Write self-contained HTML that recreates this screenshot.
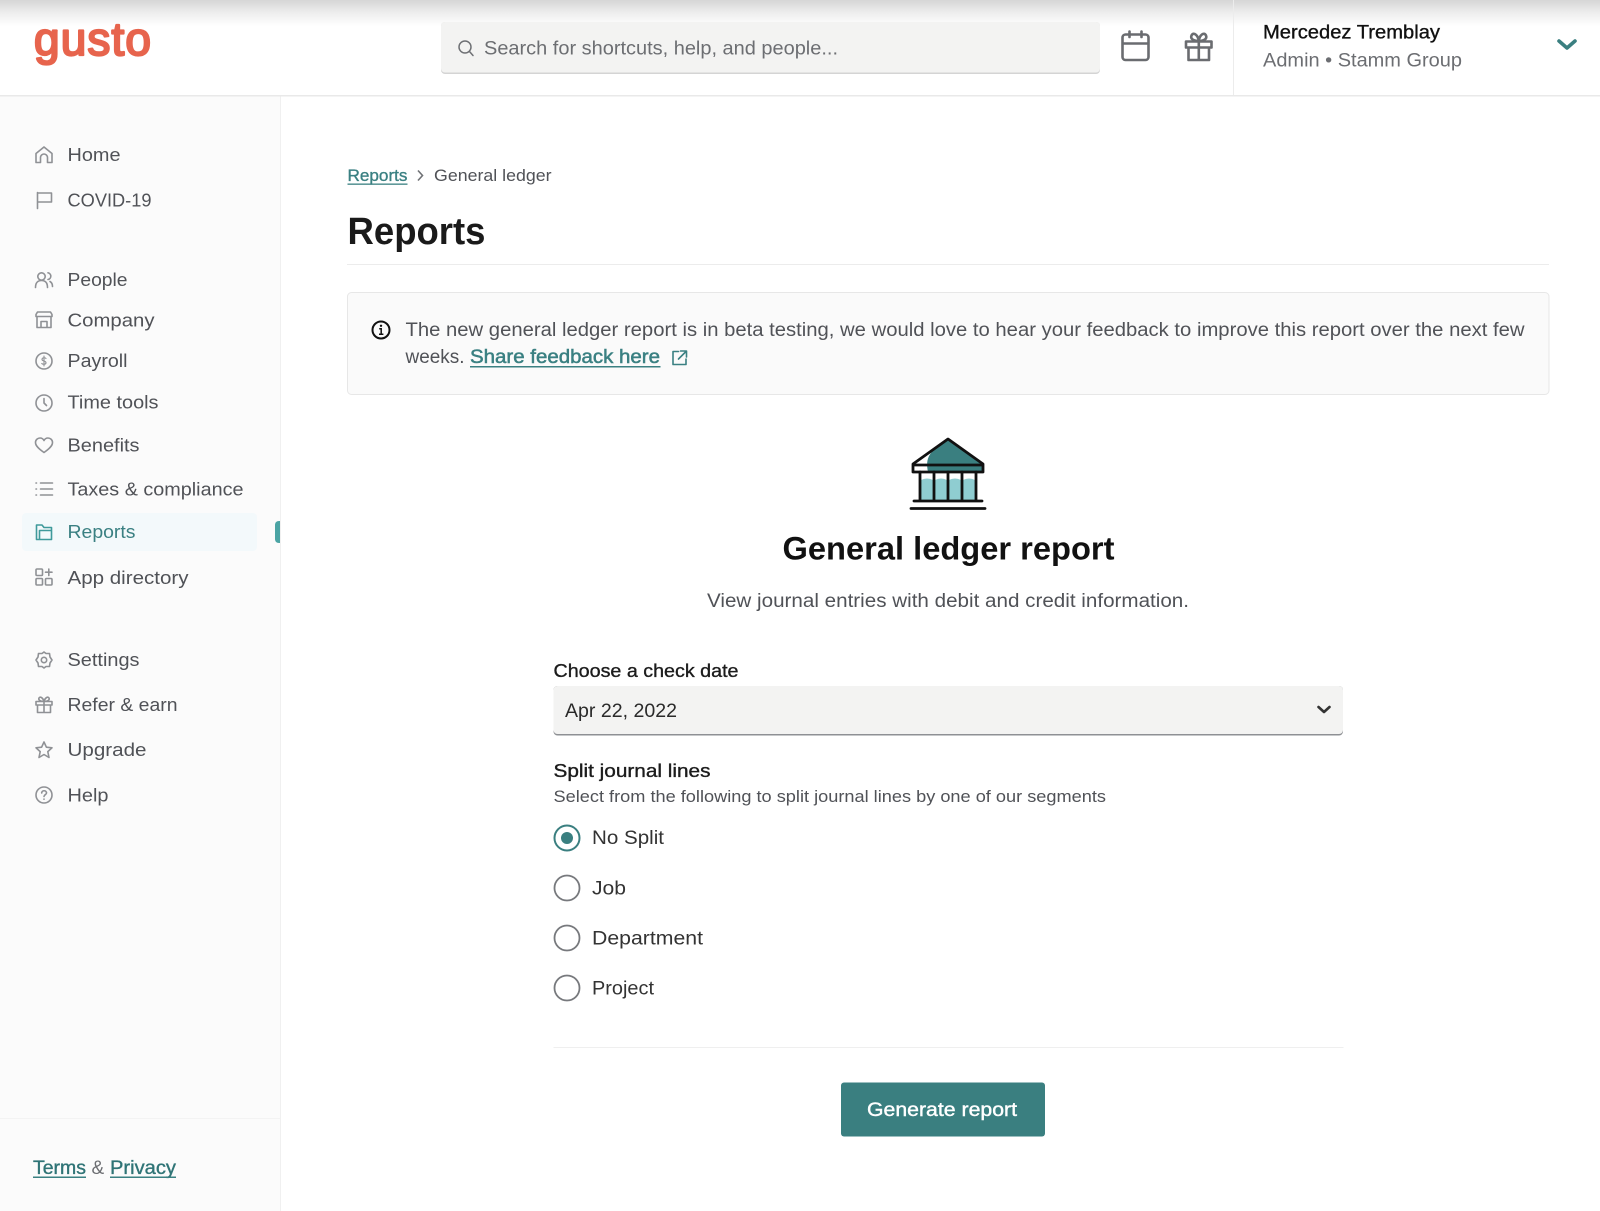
<!DOCTYPE html>
<html lang="en">
<head>
<meta charset="utf-8">
<title>Gusto - General ledger report</title>
<style>
html,body{margin:0;padding:0;background:#fff;width:1600px;height:1211px;overflow:hidden}
svg{display:block;font-family:"Liberation Sans",sans-serif;filter:blur(.3px)}
.nav{font-size:18.5px;fill:#505257}
.ic{fill:none;stroke:#8f9195;stroke-width:1.6;stroke-linecap:round;stroke-linejoin:round}
.med{stroke-width:.35px}
</style>
</head>
<body>
<svg width="1600" height="1211" viewBox="0 0 1600 1211" xmlns="http://www.w3.org/2000/svg">
<defs>
<linearGradient id="top" x1="0" y1="0" x2="0" y2="1">
<stop offset="0" stop-color="#d6d6d6"/><stop offset=".5" stop-color="#eeeeee"/><stop offset="1" stop-color="#ffffff"/>
</linearGradient>
</defs>
<rect width="1600" height="1211" fill="#fff"/>

<!-- sidebar -->
<rect x="0" y="96" width="280" height="1115" fill="#fbfbfb"/>
<rect x="280" y="96" width="1" height="1115" fill="#f0f0f0"/>
<rect x="0" y="1118" width="280" height="1" fill="#f3f3f3"/>

<!-- header -->
<rect x="0" y="0" width="1600" height="26" fill="url(#top)"/>
<rect x="0" y="95" width="1600" height="1.5" fill="#e9e9e9"/>
<rect x="1233" y="0" width="1" height="95" fill="#ececec"/>
<text x="34" y="55" font-size="46" fill="#e7644d" stroke="#e7644d" stroke-width="2.200" stroke-linejoin="round" textLength="117" lengthAdjust="spacing">gusto</text>

<rect x="441" y="22" width="659" height="52" rx="4" fill="#d4d4d4"/>
<rect x="441" y="22" width="659" height="50.5" rx="4" fill="#f3f3f2"/>
<circle cx="465" cy="47" r="6" fill="none" stroke="#6f7175" stroke-width="1.5"/>
<path d="M469.5 51.5L473 55.5" stroke="#6f7175" stroke-width="1.5" stroke-linecap="round"/>
<text x="484" y="54.500" font-size="19" fill="#6c6e72" textLength="354" lengthAdjust="spacingAndGlyphs">Search for shortcuts, help, and people...</text>

<g fill="none" stroke="#6a6c70" stroke-width="2.6" stroke-linecap="round" stroke-linejoin="round" transform="translate(-1,0)">
<rect x="1123.5" y="34.5" width="26" height="25.5" rx="3"/>
<path d="M1124 43.5H1149M1130.500 31.500V37M1142.500 31.500V37"/>
<path d="M1187 41.500H1212.500V47.500H1187ZM1189.500 47.500V60H1210V47.500M1199.800 41.500V60"/>
<path d="M1199.800 41C1195 41 1191 39 1192.500 35.500C1194.500 31.500 1199 35 1199.800 41C1200.500 35 1205 31.500 1207 35.500C1208.500 39 1204.500 41 1199.800 41Z"/>
</g>

<text x="1263" y="38.500" font-size="19" fill="#111" stroke="#111" class="med" textLength="177" lengthAdjust="spacingAndGlyphs">Mercedez Tremblay</text>
<text x="1263" y="66.500" font-size="19" fill="#6c6e72" textLength="199" lengthAdjust="spacingAndGlyphs">Admin • Stamm Group</text>
<path d="M1559 41L1567 48L1575 41" fill="none" stroke="#3a7f80" stroke-width="3.600" stroke-linecap="round" stroke-linejoin="round"/>

<!-- sidebar nav -->
<rect x="22" y="513" width="235" height="38" rx="4" fill="#f3f9fb"/>
<path d="M280 521H279C276.500 521 275 522.500 275 525V539C275 541.500 276.500 543 279 543H280Z" fill="#4ba4a4"/>

<text class="nav" x="67.500" y="161" textLength="53" lengthAdjust="spacingAndGlyphs">Home</text>
<text class="nav" x="67.500" y="206.500" textLength="84" lengthAdjust="spacingAndGlyphs">COVID-19</text>
<text class="nav" x="67.500" y="286" textLength="60" lengthAdjust="spacingAndGlyphs">People</text>
<text class="nav" x="67.500" y="326.500" textLength="87" lengthAdjust="spacingAndGlyphs">Company</text>
<text class="nav" x="67.500" y="367" textLength="60" lengthAdjust="spacingAndGlyphs">Payroll</text>
<text class="nav" x="67.500" y="408.500" textLength="91" lengthAdjust="spacingAndGlyphs">Time tools</text>
<text class="nav" x="67.500" y="451.500" textLength="72" lengthAdjust="spacingAndGlyphs">Benefits</text>
<text class="nav" x="67.500" y="495.500" textLength="176" lengthAdjust="spacingAndGlyphs">Taxes &amp; compliance</text>
<text class="nav" x="67.500" y="538" textLength="68" lengthAdjust="spacingAndGlyphs" style="fill:#3a8082">Reports</text>
<text class="nav" x="67.500" y="584" textLength="121" lengthAdjust="spacingAndGlyphs">App directory</text>
<text class="nav" x="67.500" y="666" textLength="72" lengthAdjust="spacingAndGlyphs">Settings</text>
<text class="nav" x="67.500" y="711" textLength="110" lengthAdjust="spacingAndGlyphs">Refer &amp; earn</text>
<text class="nav" x="67.500" y="756" textLength="79" lengthAdjust="spacingAndGlyphs">Upgrade</text>
<text class="nav" x="67.500" y="801.500" textLength="41" lengthAdjust="spacingAndGlyphs">Help</text>

<g class="ic">
<g transform="translate(44,155)"><path d="M-8 -1.500L0 -8L8 -1.500V7.500H3.500V2.500A3.500 3.500 0 0 0 -3.500 2.500V7.500H-8Z"/></g>
<g transform="translate(44,200)"><path d="M-6.500 8.500V-7.500M-6.500 -7H7.500V2H-6.500"/></g>
<g transform="translate(44,280)"><circle cx="-2.500" cy="-3.500" r="3.700"/><path d="M-8.500 7.500C-8.500 2.500 -6 0.500 -2.500 0.500S3.500 2.500 3.500 7.500M4 -7.200A3.400 3.400 0 0 1 4 -0.500M6 1.500C7.800 2.500 8.500 4.500 8.500 6.500"/></g>
<g transform="translate(44,320)"><path d="M-7 -3V7.500H7V-3M-8 -3.500V-5.500L-6.500 -8H6.500L8 -5.500V-3.500ZM-3 7.500V1.500H3V7.500"/></g>
<g transform="translate(44,361)"><circle r="8"/><path d="M2 -2.500C1.500 -3.500 -2 -3.800 -2 -1.500C-2 0.500 2 -0.500 2 1.700C2 3.700 -1.500 3.500 -2.200 2.500M0 -5V5" stroke-width="1.100"/></g>
<g transform="translate(44,403)"><circle r="8"/><path d="M0 -4.500V0L2.500 2.500"/></g>
<g transform="translate(44,445)"><path d="M0 7.500C-5 4 -8.500 1 -8.500 -2.500C-8.500 -5.500 -6 -7 -4 -7C-2.300 -7 -0.800 -6 0 -4.500C0.800 -6 2.300 -7 4 -7C6 -7 8.500 -5.500 8.500 -2.500C8.500 1 5 4 0 7.500Z"/></g>
<g transform="translate(44,489)"><path d="M-3.500 -6H8.500M-3.500 0H8.500M-3.500 6H8.500M-8 -6H-7.500M-8 0H-7.500M-8 6H-7.500"/></g>
<g transform="translate(44,532)" style="stroke:#3f9a9b"><path d="M-7.500 7.500V-7H-2L0 -4.500H7.500V7.500ZM-4.500 7.500V-1.500H7.500"/></g>
<g transform="translate(44,577)"><rect x="-8" y="-8" width="6.500" height="6.500" rx="1"/><rect x="-8" y="1.500" width="6.500" height="6.500" rx="1"/><rect x="1.500" y="1.500" width="6.500" height="6.500" rx="1"/><path d="M4.800 -8V-1.500M1.500 -4.800H8"/></g>
<g transform="translate(44,660)"><path d="M0 -8L2 -6.500L5.500 -6.500L6 -3L8 0L6 3L5.500 6.500L2 6.500L0 8L-2 6.500L-5.500 6.500L-6 3L-8 0L-6 -3L-5.500 -6.500L-2 -6.500Z"/><circle r="2.700"/></g>
<g transform="translate(44,705)"><path d="M-8 -3.500H8V0H-8ZM-6.500 0V7.500H6.500V0M0 -3.500V7.500M0 -3.500C-3.500 -3.500 -6 -5 -5 -7C-3.800 -9 -0.800 -7 0 -3.500C0.800 -7 3.800 -9 5 -7C6 -5 3.500 -3.500 0 -3.500Z"/></g>
<g transform="translate(44,750)"><path d="M0 -8L2.400 -2.800L8 -2.200L3.800 1.600L5 7.500L0 4.500L-5 7.500L-3.800 1.600L-8 -2.200L-2.400 -2.800Z"/></g>
<g transform="translate(44,795)"><circle r="8"/><path d="M-2.300 -2C-2.300 -5 2.500 -5 2.500 -2C2.500 -0.300 0 -0.300 0 1.500M0 4V4.200"/></g>
</g>

<!-- footer links -->
<g class="med" font-size="19" fill="#2f7476" stroke="#2f7476">
<text x="33" y="1174" textLength="53" lengthAdjust="spacingAndGlyphs">Terms</text>
<text x="110" y="1174" textLength="66" lengthAdjust="spacingAndGlyphs">Privacy</text>
</g>
<text x="91.500" y="1174" font-size="19" fill="#6c6e72">&amp;</text>
<rect x="33" y="1176.500" width="53" height="1.500" fill="#3a8082"/>
<rect x="110" y="1176.500" width="66" height="1.500" fill="#3a8082"/>

<!-- breadcrumb -->
<text x="347.500" y="181" font-size="17" fill="#3a8082" stroke="#3a8082" class="med" textLength="60" lengthAdjust="spacingAndGlyphs">Reports</text>
<rect x="347.500" y="183.500" width="60" height="1.300" fill="#3a8082"/>
<path d="M418 170.500L422.500 175.500L418 180.500" fill="none" stroke="#707276" stroke-width="1.600"/>
<text x="434" y="181" font-size="17" fill="#505257" textLength="117.500" lengthAdjust="spacingAndGlyphs">General ledger</text>

<text x="347.500" y="244" font-size="38" font-weight="bold" fill="#1a1a1a" textLength="138" lengthAdjust="spacingAndGlyphs">Reports</text>
<rect x="347" y="264" width="1202" height="1" fill="#ececec"/>

<!-- alert -->
<rect x="347.500" y="292.500" width="1201.500" height="102" rx="4" fill="#fafafa" stroke="#e7e7e7"/>
<circle cx="381" cy="330" r="8.500" fill="none" stroke="#111" stroke-width="2"/>
<circle cx="381" cy="325.800" r="1.200" fill="#111"/>
<path d="M379.200 328.800H381.200V334M379 334.200H383.400" fill="none" stroke="#111" stroke-width="1.500"/>
<text x="405.500" y="336" font-size="19" fill="#505257" textLength="1119" lengthAdjust="spacingAndGlyphs">The new general ledger report is in beta testing, we would love to hear your feedback to improve this report over the next few</text>
<text x="405.500" y="363" font-size="19" fill="#505257" textLength="59" lengthAdjust="spacingAndGlyphs">weeks.</text>
<text x="470" y="363" font-size="19" fill="#3a8082" stroke="#3a8082" stroke-width=".5" textLength="190" lengthAdjust="spacingAndGlyphs">Share feedback here</text>
<rect x="470" y="366" width="190.500" height="1.500" fill="#3a8082"/>
<path d="M678.500 351.500H673V364.500H686V359M680.500 351H686.500V357M686 351.500L678.500 359" fill="none" stroke="#3a8082" stroke-width="1.600" stroke-linecap="round" stroke-linejoin="round"/>

<!-- bank illustration -->
<path d="M948 439L983 464V472H913V464Z" fill="#fff"/>
<path d="M948 439L983 464V472H928C925 458 929 451 948 439Z" fill="#3a7f80"/>
<path d="M921 480Q927 477 933 480V500H921ZM935 480Q941 477 947 480V500H935ZM949 480Q955 477 961 480V500H949ZM963 480Q969 477 975 480V500H963Z" fill="#8fcdd1"/>
<g fill="none" stroke="#111" stroke-width="2.800" stroke-linejoin="round" stroke-linecap="round">
<path d="M948 439L983 464V472H913V464Z"/>
<path d="M914 465H982"/>
<path d="M920 472V500.500M934 472V500.500M948 472V500.500M962 472V500.500M976 472V500.500M914 501H982M911 508.500H985"/>
</g>

<!-- headings -->
<text x="782.500" y="559.500" font-size="32" font-weight="bold" fill="#111" textLength="332" lengthAdjust="spacingAndGlyphs">General ledger report</text>
<text x="707" y="607" font-size="19" fill="#505257" textLength="482" lengthAdjust="spacingAndGlyphs">View journal entries with debit and credit information.</text>

<!-- select -->
<text x="553.500" y="677" font-size="18" fill="#1c1c1c" stroke="#1c1c1c" class="med" textLength="185" lengthAdjust="spacingAndGlyphs">Choose a check date</text>
<rect x="553.500" y="686" width="789.500" height="49.500" rx="4" fill="#8e9094"/>
<rect x="553.500" y="686" width="789.500" height="48" rx="4" fill="#f3f3f2"/>
<text x="565" y="717" font-size="19" fill="#2a2a2a" textLength="112" lengthAdjust="spacingAndGlyphs">Apr 22, 2022</text>
<path d="M1318.500 707L1324 712L1329.500 707" fill="none" stroke="#333" stroke-width="2.600" stroke-linecap="round" stroke-linejoin="round"/>

<!-- split -->
<text x="553.500" y="777" font-size="18" fill="#1c1c1c" stroke="#1c1c1c" class="med" textLength="157" lengthAdjust="spacingAndGlyphs">Split journal lines</text>
<text x="553.500" y="802" font-size="16.500" fill="#505257" textLength="552.500" lengthAdjust="spacingAndGlyphs">Select from the following to split journal lines by one of our segments</text>

<circle cx="567" cy="838" r="12.500" fill="#fff" stroke="#3a7f80" stroke-width="2"/>
<circle cx="567" cy="838" r="6" fill="#3a7f80"/>
<text x="592" y="844" font-size="19" fill="#333" textLength="72" lengthAdjust="spacingAndGlyphs">No Split</text>

<circle cx="567" cy="888" r="12.500" fill="#fff" stroke="#77797d" stroke-width="1.800"/>
<text x="592" y="894.500" font-size="19" fill="#333" textLength="34" lengthAdjust="spacingAndGlyphs">Job</text>

<circle cx="567" cy="938" r="12.500" fill="#fff" stroke="#77797d" stroke-width="1.800"/>
<text x="592" y="944.500" font-size="19" fill="#333" textLength="111" lengthAdjust="spacingAndGlyphs">Department</text>

<circle cx="567" cy="988" r="12.500" fill="#fff" stroke="#77797d" stroke-width="1.800"/>
<text x="592" y="994.500" font-size="19" fill="#333" textLength="62" lengthAdjust="spacingAndGlyphs">Project</text>

<rect x="553.500" y="1047" width="790" height="1" fill="#efefef"/>

<!-- button -->
<rect x="841" y="1082.500" width="204" height="54" rx="3" fill="#3a7f80"/>
<text x="867" y="1116" font-size="19.500" fill="#fff" stroke="#fff" stroke-width=".4" textLength="150" lengthAdjust="spacingAndGlyphs">Generate report</text>
</svg>
</body>
</html>
